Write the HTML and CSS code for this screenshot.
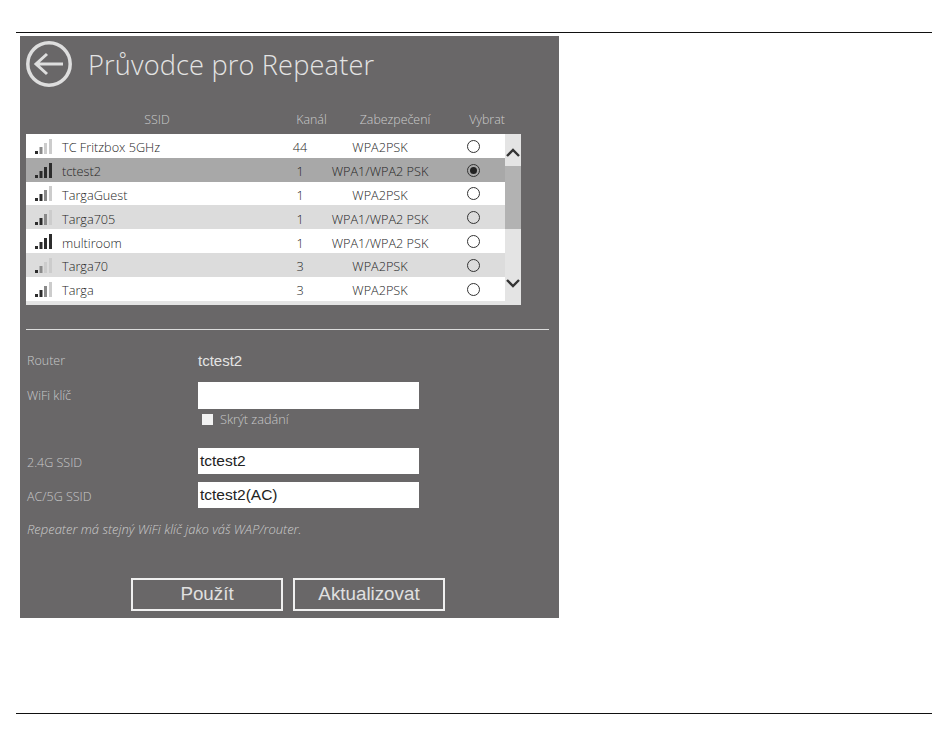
FILE: index.html
```html
<!DOCTYPE html>
<html lang="cs">
<head>
<meta charset="utf-8">
<title>Průvodce pro Repeater</title>
<link rel="stylesheet" href="styles.css">
</head>
<body>
<div class="page">
  <hr class="rule">
  <main class="panel">
    <header class="head">
      <svg class="back" width="46" height="46" viewBox="0 0 46 46" fill="none" stroke="#dedede">
        <circle cx="23" cy="23" r="21.2" stroke-width="3.500"/>
        <path d="M10 23H37M21 13L10 23L21 33" stroke-width="3"/>
      </svg>
      <h1 class="title">Průvodce pro Repeater</h1>
    </header>
    <div class="cols">
      <span class="c-ssid">SSID</span>
      <span class="c-chan">Kanál</span>
      <span class="c-sec">Zabezpečení</span>
      <span class="c-sel">Vybrat</span>
    </div>
    <div class="list">
      <div class="rows">
        <div class="row">
          <svg class="sig" width="19" height="16" viewBox="0 0 19 16"><rect class="on" x="0" y="13" width="3" height="3"/><rect class="mid" x="4.500" y="9" width="3" height="7"/><rect class="off" x="9" y="5" width="3" height="11"/><rect class="off" x="14" y="1" width="3" height="15"/></svg>
          <span class="name">TC Fritzbox 5GHz</span><span class="chan">44</span><span class="sec">WPA2PSK</span><span class="radio"></span>
        </div>
        <div class="row sel">
          <svg class="sig" width="19" height="16" viewBox="0 0 19 16"><rect class="on" x="0" y="13" width="3" height="3"/><rect class="on" x="4.500" y="9" width="3" height="7"/><rect class="on" x="9" y="5" width="3" height="11"/><rect class="on" x="14" y="1" width="3" height="15"/></svg>
          <span class="name">tctest2</span><span class="chan">1</span><span class="sec">WPA1/WPA2 PSK</span><span class="radio checked"></span>
        </div>
        <div class="row">
          <svg class="sig" width="19" height="16" viewBox="0 0 19 16"><rect class="on" x="0" y="13" width="3" height="3"/><rect class="on" x="4.500" y="9" width="3" height="7"/><rect class="mid" x="9" y="5" width="3" height="11"/><rect class="off" x="14" y="1" width="3" height="15"/></svg>
          <span class="name">TargaGuest</span><span class="chan">1</span><span class="sec">WPA2PSK</span><span class="radio"></span>
        </div>
        <div class="row alt">
          <svg class="sig" width="19" height="16" viewBox="0 0 19 16"><rect class="on" x="0" y="13" width="3" height="3"/><rect class="on" x="4.500" y="9" width="3" height="7"/><rect class="mid" x="9" y="5" width="3" height="11"/><rect class="off" x="14" y="1" width="3" height="15"/></svg>
          <span class="name">Targa705</span><span class="chan">1</span><span class="sec">WPA1/WPA2 PSK</span><span class="radio"></span>
        </div>
        <div class="row">
          <svg class="sig" width="19" height="16" viewBox="0 0 19 16"><rect class="on" x="0" y="13" width="3" height="3"/><rect class="on" x="4.500" y="9" width="3" height="7"/><rect class="on" x="9" y="5" width="3" height="11"/><rect class="on" x="14" y="1" width="3" height="15"/></svg>
          <span class="name">multiroom</span><span class="chan">1</span><span class="sec">WPA1/WPA2 PSK</span><span class="radio"></span>
        </div>
        <div class="row alt">
          <svg class="sig" width="19" height="16" viewBox="0 0 19 16"><rect class="on" x="0" y="13" width="3" height="3"/><rect class="mid" x="4.500" y="9" width="3" height="7"/><rect class="off" x="9" y="5" width="3" height="11"/><rect class="off" x="14" y="1" width="3" height="15"/></svg>
          <span class="name">Targa70</span><span class="chan">3</span><span class="sec">WPA2PSK</span><span class="radio"></span>
        </div>
        <div class="row">
          <svg class="sig" width="19" height="16" viewBox="0 0 19 16"><rect class="on" x="0" y="13" width="3" height="3"/><rect class="on" x="4.500" y="9" width="3" height="7"/><rect class="mid" x="9" y="5" width="3" height="11"/><rect class="off" x="14" y="1" width="3" height="15"/></svg>
          <span class="name">Targa</span><span class="chan">3</span><span class="sec">WPA2PSK</span><span class="radio"></span>
        </div>
      </div>
      <div class="scroll">
        <svg class="arrow" width="16" height="32" viewBox="0 0 16 32" fill="none" stroke="#333" stroke-width="2.400"><path d="M2 22L8 16L14 22"/></svg>
        <div class="thumb"></div>
        <svg class="arrow" width="16" height="32" viewBox="0 0 16 32" fill="none" stroke="#333" stroke-width="2.400"><path d="M2 7L8 13L14 7"/></svg>
      </div>
    </div>
    <hr class="sep">
    <div class="form">
      <div class="f-row r-router"><span class="label">Router</span><span class="value">tctest2</span></div>
      <div class="f-row r-key"><span class="label">WiFi klíč</span><div class="input"></div></div>
      <div class="check"><span class="box"></span><span class="check-text">Skrýt zadání</span></div>
      <div class="f-row r-24"><span class="label">2.4G SSID</span><div class="input">tctest2</div></div>
      <div class="f-row r-5"><span class="label">AC/5G SSID</span><div class="input">tctest2(AC)</div></div>
      <p class="note">Repeater má stejný WiFi klíč jako váš WAP/router.</p>
    </div>
    <div class="btns">
      <button class="btn" type="button">Použít</button>
      <button class="btn" type="button">Aktualizovat</button>
    </div>
  </main>
  <hr class="rule rule-bottom">
</div>
</body>
</html>
```
FILE: styles.css
```css
* { box-sizing: border-box; }
html, body { margin: 0; padding: 0; background: #fff; }
body { font-family: "Open Sans", "Liberation Sans", sans-serif; font-weight: 300; }
.page { width: 950px; height: 746px; padding-top: 32px; }
.rule { margin: 0 18px 0 16px; border: 0; height: 1px; background: #111; }
.rule-bottom { margin-top: 95px; }
.panel { width: 539px; height: 582px; margin: 3px 0 0 20px; background: #696768; color: #d6d6d6; padding-left: 6px; }
.head { height: 69px; padding-top: 5px; display: flex; align-items: flex-start; }
.back { display: block; flex: none; }
.title { margin: 2px 0 0 16px; font-size: 27.200px; line-height: 44px; font-weight: 300; color: #e4e4e4; letter-spacing: .15px; white-space: nowrap; }
.cols { height: 29px; display: grid; grid-template-columns: 262px 47px 120px 64px; font-size: 12.400px; line-height: 29px; color: #cccccc; text-align: center; }
.list { width: 495px; height: 171px; display: flex; background: #e4e4e4; }
.rows { width: 479px; flex: none; }
.row { height: 23.800px; display: grid; grid-template-columns: 9px 19px 223px 46px 114px 1fr; align-items: center; background: #fff; color: #262626; font-size: 12.700px; }
.row > span { padding-top: 3px; }
.row .sig { grid-column: 2; }
.row.sel { background: #a8a8a8; }
.row.alt { background: #dcdcdc; }
.on { fill: #2c2c2c; }
.mid { fill: #8a8a8a; }
.off { fill: #cccccc; }
.row > .name { padding-left: 8px; white-space: nowrap; }
.chan { text-align: center; }
.sec { text-align: center; white-space: nowrap; }
.row > .radio { width: 13px; height: 13px; padding: 0; border-radius: 50%; border: 1px solid #333; background: transparent; margin: 1px 0 0 30px; position: relative; }
.radio.checked::after { content: ""; position: absolute; left: 2px; top: 2px; width: 7px; height: 7px; border-radius: 50%; background: #222; }
.scroll { width: 16px; display: flex; flex-direction: column; background: #e4e4e4; }
.arrow { display: block; flex: none; }
.thumb { height: 63px; background: #b2b2b2; }
.scroll .arrow:last-child { margin-top: 44px; }
.sep { margin: 24px 0 0 0; width: 523px; border: 0; height: 1px; background: #dcdcdc; }
.form { display: block; font-size: 12.500px; }
.f-row { display: grid; grid-template-columns: 172px 221px; align-items: center; }
.r-router { height: 22px; margin-top: 19px; }
.r-key { height: 26px; margin-top: 11px; align-items: start; }
.r-24 { height: 26px; margin-top: 21px; }
.r-5 { height: 25px; margin-top: 8px; }
.label { color: #c8c8c8; padding-left: 1px; }
.r-key .label { line-height: 26px; padding-top: 1px; }
.r-24 .label { padding-top: 3px; }
.r-5 .label { padding-top: 3px; }
.value { font-family: "Liberation Sans", sans-serif; font-weight: 400; font-size: 15px; color: #e4e4e4; }
.input { height: 100%; background: #fff; font-family: "Liberation Sans", sans-serif; font-weight: 400; font-size: 15.500px; line-height: 26px; color: #222; padding-left: 2px; }
.check { margin: 3px 0 0 176px; height: 16px; display: flex; align-items: center; gap: 7px; }
.box { width: 11px; height: 11px; background: #f2f2f2; flex: none; }
.check-text { color: #c8c8c8; font-size: 12.700px; }
.note { margin: 13px 0 0 1px; font-style: italic; color: #cccccc; line-height: 18px; font-size: 13px; }
.btns { margin: 40px 0 0 105px; display: flex; gap: 10px; }
.btn { width: 152px; height: 33px; background: transparent; border: 2px solid #f0f0f0; color: #e0e0e0; font-family: "Liberation Sans", sans-serif; font-size: 18.800px; font-weight: 400; padding: 0 0 2px; }
```
